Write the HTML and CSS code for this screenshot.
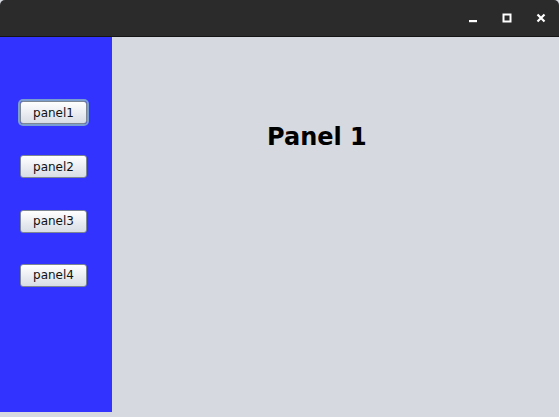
FILE: index.html
```html
<!DOCTYPE html>
<html>
<head>
<meta charset="utf-8">
<link rel="stylesheet" href="styles.css">
</head>
<body>
<div class="window">
  <div class="titlebar">
    <div class="controls">
      <span class="ctl min"><svg width="10" height="10" viewBox="0 0 10 10"><rect x="1" y="7" width="8" height="2.2" fill="#fff"/></svg></span>
      <span class="ctl max"><svg width="10" height="10" viewBox="0 0 10 10"><rect x="1.5" y="1.5" width="7" height="7" fill="none" stroke="#fff" stroke-width="2"/></svg></span>
      <span class="ctl close"><svg width="10" height="10" viewBox="0 0 10 10"><path d="M1.5 1.5 L8.5 8.5 M8.5 1.5 L1.5 8.5" stroke="#fff" stroke-width="2.2"/></svg></span>
    </div>
  </div>
  <div class="main">
    <div class="sidebar">
      <button class="btn focused">panel1</button>
      <button class="btn">panel2</button>
      <button class="btn">panel3</button>
      <button class="btn">panel4</button>
    </div>
    <div class="content">
      <h1 class="title">Panel 1</h1>
    </div>
  </div>
</div>
</body>
</html>
```
FILE: styles.css
```css
html, body {
  margin: 0;
  padding: 0;
}
body {
  width: 559px;
  height: 417px;
  background: #d6d9e0;
  overflow: hidden;
  font-family: "DejaVu Sans", sans-serif;
}
.window {
  display: flex;
  flex-direction: column;
  height: 412px;
}
.titlebar {
  height: 36px;
  background: #2b2b2b;
  border-bottom: 1px solid #151515;
  border-radius: 5px 5px 0 0;
  display: flex;
  justify-content: flex-end;
  align-items: center;
}
.controls {
  display: flex;
  gap: 24px;
  padding-right: 13px;
  padding-top: 0;
}
.ctl {
  width: 10px;
  height: 10px;
  display: block;
}
.ctl svg {
  display: block;
}
.main {
  flex: 1;
  display: flex;
}
.sidebar {
  width: 112px;
  background: #3333ff;
  display: flex;
  flex-direction: column;
  align-items: flex-start;
  padding-top: 64px;
  gap: 31.33px;
  box-sizing: border-box;
}
.btn {
  margin: 0 0 0 20px;
  width: 67px;
  height: 23px;
  padding: 0;
  font-family: "DejaVu Sans", sans-serif;
  font-size: 12px;
  color: #111;
  border: 1px solid #7d8794;
  border-radius: 3px;
  background: linear-gradient(#ffffff, #e9ecf1 55%, #d8dde5);
}
.btn.focused {
  box-shadow: 0 0 0 2px #7b9ed0;
}
.content {
  flex: 1;
  padding-top: 86px;
  padding-left: 155px;
}
.title {
  margin: 0;
  font-family: "DejaVu Sans", sans-serif;
  font-weight: bold;
  font-size: 24px;
  line-height: 28px;
  color: #000;
}
```
